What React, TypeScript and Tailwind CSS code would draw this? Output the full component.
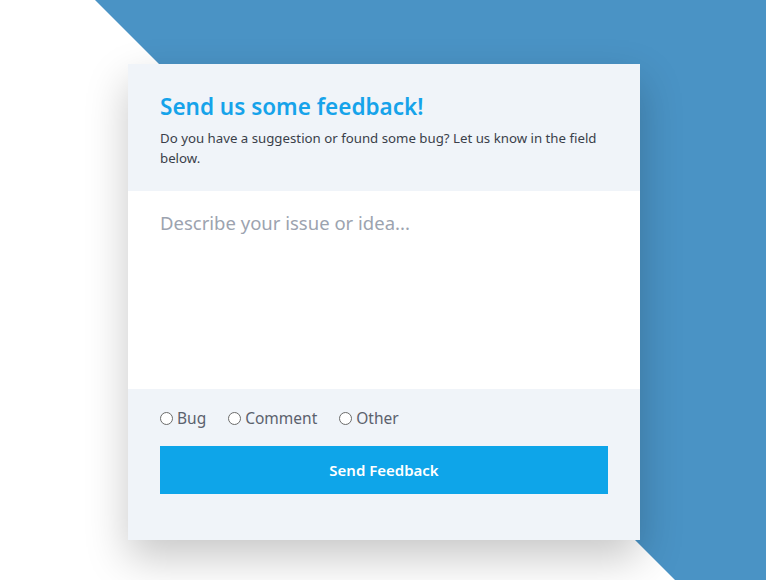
import React from "react";

export default function App() {
  const font = { fontFamily: '"Noto Sans", "Open Sans", sans-serif' };
  return (
    <div className="relative h-[580px] w-[766px] overflow-hidden bg-white" style={font}>
      <div className="absolute inset-0 bg-[#4a93c5] [clip-path:polygon(95px_0,100%_0,100%_671px)]" />
      <div className="relative pl-[128px] pt-[64px]">
        <div className="flex w-[512px] flex-col bg-[#f0f4f9] shadow-[0_18px_40px_rgba(0,0,0,0.22)]">
          <div className="flex h-[127px] flex-col px-8 pt-[28px]">
            <h1 className="text-[22.5px] font-semibold leading-[30px] text-[#16a3ea]">Send us some feedback!</h1>
            <p className="mt-[6px] text-[13.25px] leading-5 text-[#3a3f4a]">
              Do you have a suggestion or found some bug? Let us know in the field below.
            </p>
          </div>
          <textarea
            className="h-[198px] resize-none bg-white px-8 pt-[18px] text-[18.5px] leading-7 text-gray-700 outline-none placeholder:text-[#9ca3af]"
            placeholder="Describe your issue or idea..."
          />
          <div className="flex h-[151px] flex-col px-8 pt-[17px]">
            <div className="flex items-center gap-[22px] text-[15.5px] leading-6 text-[#5b616d]">
              <label className="flex items-center gap-[4px]">
                <span className="h-[13px] w-[13px] rounded-full border border-[#6b6b6b] bg-white" />
                Bug
              </label>
              <label className="flex items-center gap-[4px]">
                <span className="h-[13px] w-[13px] rounded-full border border-[#6b6b6b] bg-white" />
                Comment
              </label>
              <label className="flex items-center gap-[4px]">
                <span className="h-[13px] w-[13px] rounded-full border border-[#6b6b6b] bg-white" />
                Other
              </label>
            </div>
            <button className="mt-[16px] h-[48px] w-full bg-[#0ea5e9] text-[15px] font-semibold text-white">
              Send Feedback
            </button>
          </div>
        </div>
      </div>
    </div>
  );
}
